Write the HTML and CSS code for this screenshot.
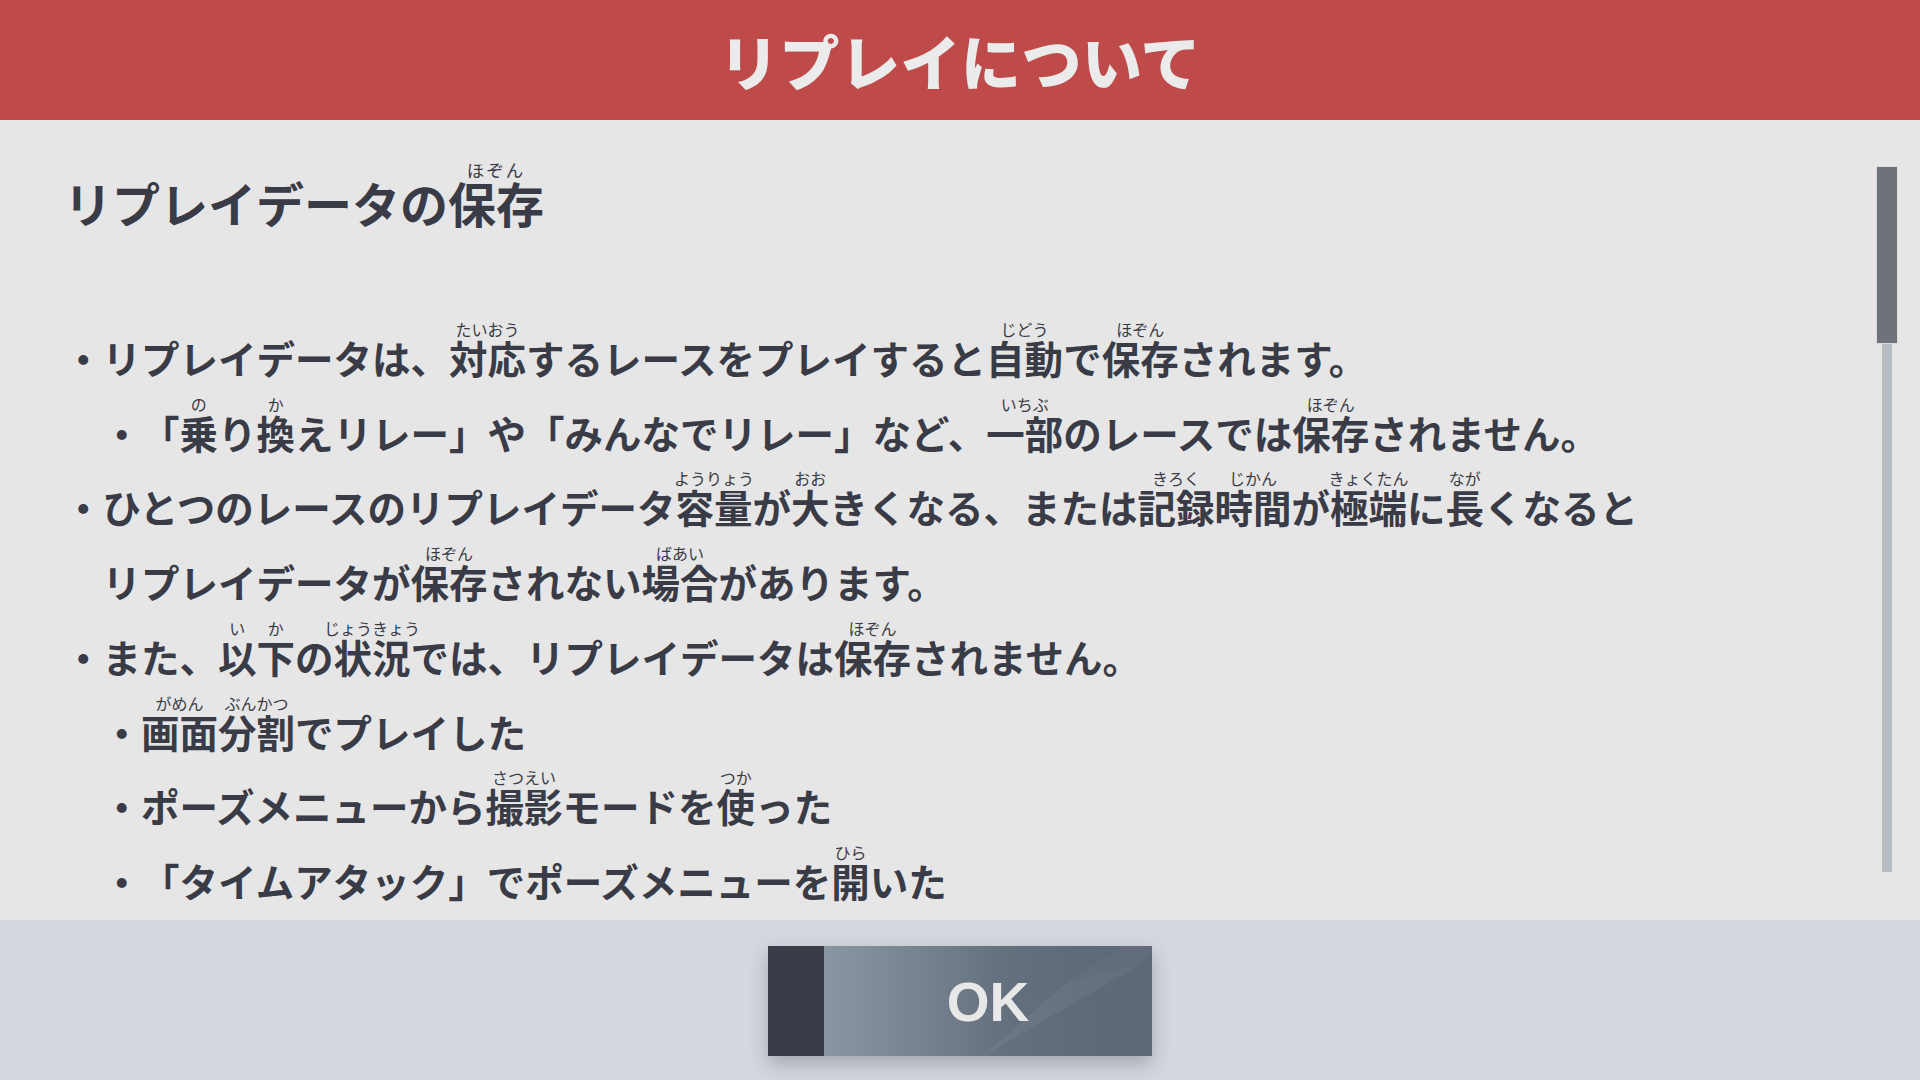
FILE: index.html
```html
<!DOCTYPE html>
<html lang="ja">
<head>
<meta charset="utf-8">
<title>リプレイについて</title>
<link rel="stylesheet" href="styles.css">
</head>
<body>
<div class="screen">
  <header class="header">
    <h1 class="title">リプレイについて</h1>
  </header>
  <main class="main">
    <div class="content">
      <h2 class="heading">リプレイデータの<ruby>保存<rt>ほぞん</rt></ruby></h2>
      <ul class="list">
        <li class="item"><span class="mark">・</span><span class="text">リプレイデータは、<ruby>対応<rt>たいおう</rt></ruby>するレースをプレイすると<ruby>自動<rt>じどう</rt></ruby>で<ruby>保存<rt>ほぞん</rt></ruby>されます。</span></li>
        <li class="item sub"><span class="mark">・</span><span class="text">「<ruby>乗<rt>の</rt></ruby>り<ruby>換<rt>か</rt></ruby>えリレー」や「みんなでリレー」など、<ruby>一部<rt>いちぶ</rt></ruby>のレースでは<ruby>保存<rt>ほぞん</rt></ruby>されません。</span></li>
        <li class="item"><span class="mark">・</span><span class="text">ひとつのレースのリプレイデータ<ruby>容量<rt>ようりょう</rt></ruby>が<ruby>大<rt>おお</rt></ruby>きくなる、または<ruby>記録<rt>きろく</rt></ruby><ruby>時間<rt>じかん</rt></ruby>が<ruby>極端<rt>きょくたん</rt></ruby>に<ruby>長<rt>なが</rt></ruby>くなると<br>リプレイデータが<ruby>保存<rt>ほぞん</rt></ruby>されない<ruby>場合<rt>ばあい</rt></ruby>があります。</span></li>
        <li class="item"><span class="mark">・</span><span class="text">また、<ruby>以<rt>い</rt></ruby><ruby>下<rt>か</rt></ruby>の<ruby>状況<rt>じょうきょう</rt></ruby>では、リプレイデータは<ruby>保存<rt>ほぞん</rt></ruby>されません。</span></li>
        <li class="item sub"><span class="mark">・</span><span class="text"><ruby>画面<rt>がめん</rt></ruby><ruby>分割<rt>ぶんかつ</rt></ruby>でプレイした</span></li>
        <li class="item sub"><span class="mark">・</span><span class="text">ポーズメニューから<ruby>撮影<rt>さつえい</rt></ruby>モードを<ruby>使<rt>つか</rt></ruby>った</span></li>
        <li class="item sub"><span class="mark">・</span><span class="text">「タイムアタック」でポーズメニューを<ruby>開<rt>ひら</rt></ruby>いた</span></li>
      </ul>
    </div>
    <div class="scrollbar">
      <div class="thumb"></div>
      <div class="track"></div>
    </div>
  </main>
  <footer class="footer">
    <button class="ok-button" type="button">
      <span class="ok-tab"></span>
      <span class="ok-face">
        <svg class="ok-streak" width="328" height="110" viewBox="0 0 328 110" aria-hidden="true">
          <polygon points="159,110 319,17 243,36" fill="#ffffff" fill-opacity="0.05"/>
          <polygon points="243,36 298,0 328,0 328,8 319,17" fill="#ffffff" fill-opacity="0.03"/>
        </svg>
        <span class="ok-label">OK</span>
      </span>
    </button>
  </footer>
</div>
</body>
</html>
```

FILE: styles.css
```css
* {
  box-sizing: border-box;
}

html, body {
  margin: 0;
  padding: 0;
}

body {
  width: 1920px;
  height: 1080px;
  overflow: hidden;
  background: #e6e6e6;
  font-family: "Noto Sans CJK JP", "Noto Sans", sans-serif;
  color: #393c47;
}

.screen {
  display: flex;
  flex-direction: column;
  width: 1920px;
  height: 1080px;
}

.header {
  height: 120px;
  flex: 0 0 120px;
  background: #bf4a4a;
  display: flex;
  align-items: center;
  justify-content: center;
}

.title {
  margin: 0;
  font-size: 60px;
  font-weight: 900;
  line-height: 1;
  color: #ebebeb;
  letter-spacing: 0.5px;
}

.main {
  flex: 0 0 800px;
  height: 800px;
  display: flex;
  background: #e6e6e6;
  overflow: hidden;
}

.content {
  flex: 1;
  padding: 52px 0 0 64px;
  overflow: hidden;
}

.heading {
  margin: 0 0 88px 0;
  font-size: 48px;
  font-weight: 700;
  line-height: 60px;
  white-space: nowrap;
}

.list {
  list-style: none;
  margin: 0;
  padding: 0;
  font-size: 38.5px;
  font-weight: 700;
  line-height: 74.7px;
}

.item {
  display: flex;
  white-space: nowrap;
}

.item.sub {
  padding-left: 38.5px;
}

.mark {
  flex: 0 0 38.5px;
  width: 38.5px;
}

ruby {
  position: relative;
  ruby-position: over;
}

rt {
  position: absolute;
  left: 50%;
  top: -8px;
  transform: translateX(-50%);
  font-size: 16px;
  font-weight: 400;
  line-height: 1;
  white-space: nowrap;
  color: #393c47;
}

.heading rt {
  font-size: 17.5px;
  top: -6px;
  letter-spacing: 2px;
}

.scrollbar {
  flex: 0 0 22px;
  width: 22px;
  margin-right: 22px;
  padding-top: 46px;
  display: flex;
  flex-direction: column;
  align-items: center;
}

.thumb {
  width: 22px;
  height: 178px;
  background: #6d7378;
  border: 1px solid #dedada;
}

.track {
  width: 10px;
  height: 528px;
  background: #b7bcc3;
}

.footer {
  flex: 0 0 160px;
  height: 160px;
  background: #d4d7de;
  display: flex;
  justify-content: center;
  padding-top: 26px;
}

.ok-button {
  display: flex;
  width: 384px;
  height: 110px;
  padding: 0;
  margin: 0;
  border: 0;
  background: none;
  box-shadow: 0 8px 18px rgba(40, 45, 60, 0.28);
  cursor: pointer;
}

.ok-tab {
  flex: 0 0 56px;
  height: 110px;
  background: #3a3d48;
}

.ok-face {
  position: relative;
  flex: 1;
  height: 110px;
  display: flex;
  align-items: center;
  justify-content: center;
  background: linear-gradient(90deg, #8b96a3 0%, #76828f 30%, #65707f 55%, #5e6979 80%, #5c6777 100%);
  overflow: hidden;
}

.ok-streak {
  position: absolute;
  left: 0;
  top: 0;
}

.ok-label {
  position: relative;
  font-family: "Liberation Sans", Arial, sans-serif;
  font-weight: 700;
  font-size: 55px;
  line-height: 1;
  color: #e8e8e8;
  padding-top: 2px;
}
```
